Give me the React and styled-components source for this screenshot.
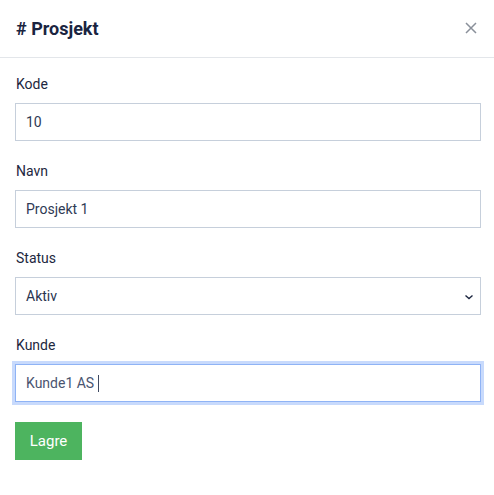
import React from "react";
import styled, { createGlobalStyle } from "styled-components";

const Global = createGlobalStyle`
  html, body { margin: 0; padding: 0; background: #ffffff; }
  body { font-family: "Roboto", "Noto Sans", sans-serif; color: #1d2740; }
  * { box-sizing: border-box; }
`;

const Modal = styled.div`
  width: 494px;
  background: #fff;
`;

const Header = styled.div`
  height: 58px;
  padding: 0 16px 0 16px;
  display: flex;
  align-items: center;
  justify-content: space-between;
  border-bottom: 1px solid #e3e6ea;
`;

const Title = styled.h1`
  margin: 0;
  font-size: 18px;
  font-weight: 700;
  color: #1a2440;
`;

const Close = styled.button`
  border: 0;
  background: none;
  padding: 0;
  width: 14px;
  height: 14px;
  display: flex;
  align-items: center;
  justify-content: center;
  cursor: pointer;
  margin-top: -2px;
`;

const Body = styled.form`
  padding: 16px 13px 35px 15px;
  display: flex;
  flex-direction: column;
`;

const Field = styled.div`
  display: flex;
  flex-direction: column;
  margin-bottom: 20px;
`;

const Label = styled.label`
  font-size: 14px;
  line-height: 20px;
  color: #1d2740;
  margin: 0 0 9px 1px;
`;

const Input = styled.input`
  width: 100%;
  height: 38px;
  border: 1px solid #c6cfdb;
  padding: 0 10px;
  font: inherit;
  font-size: 14px;
  color: #2f3a55;
  background: #fff;
  outline: none;
  border-radius: 0;
`;

const SelectWrap = styled.div`
  position: relative;
  height: 38px;
  border: 1px solid #c6cfdb;
  display: flex;
  align-items: center;
  padding: 0 10px;
  font-size: 14px;
  color: #2a3450;
`;

const Chevron = styled.svg`
  position: absolute;
  right: 6px;
  top: 16px;
`;

const Caret = styled.span`
  display: inline-block;
  width: 1px;
  height: 17px;
  background: #3f4a63;
  margin-left: 4px;
`;

const FakeInput = styled.div`
  height: 38px;
  border: 1px solid #8fb3f5;
  box-shadow: 0 0 0 3px #c8dafc;
  padding: 0 10px;
  display: flex;
  align-items: center;
  font-size: 14px;
  color: #4a5470;
`;

const Button = styled.button`
  align-self: flex-start;
  width: 67px;
  height: 38px;
  border: 0;
  background: #4db45f;
  color: #fff;
  font: inherit;
  font-size: 15px;
  border-radius: 0;
`;

export default function App() {
  return (
    <>
      <Global />
      <Modal>
        <Header>
          <Title># Prosjekt</Title>
          <Close type="button" aria-label="Lukk">
            <svg width="12" height="12" viewBox="0 0 12 12">
              <path d="M1 1 L11 11 M11 1 L1 11" stroke="#8a909a" strokeWidth="1.5" fill="none" />
            </svg>
          </Close>
        </Header>
        <Body onSubmit={(e) => e.preventDefault()}>
          <Field>
            <Label>Kode</Label>
            <Input defaultValue="10" />
          </Field>
          <Field>
            <Label>Navn</Label>
            <Input defaultValue="Prosjekt 1" />
          </Field>
          <Field>
            <Label>Status</Label>
            <SelectWrap>
              Aktiv
              <Chevron width="10" height="6" viewBox="0 0 10 6">
                <path d="M1.5 1.5 L5 4.5 L8.5 1.5" stroke="#1d2740" strokeWidth="1.4" fill="none" />
              </Chevron>
            </SelectWrap>
          </Field>
          <Field>
            <Label>Kunde</Label>
            <FakeInput>
              Kunde1 AS<Caret />
            </FakeInput>
          </Field>
          <Button type="submit">Lagre</Button>
        </Body>
      </Modal>
    </>
  );
}
